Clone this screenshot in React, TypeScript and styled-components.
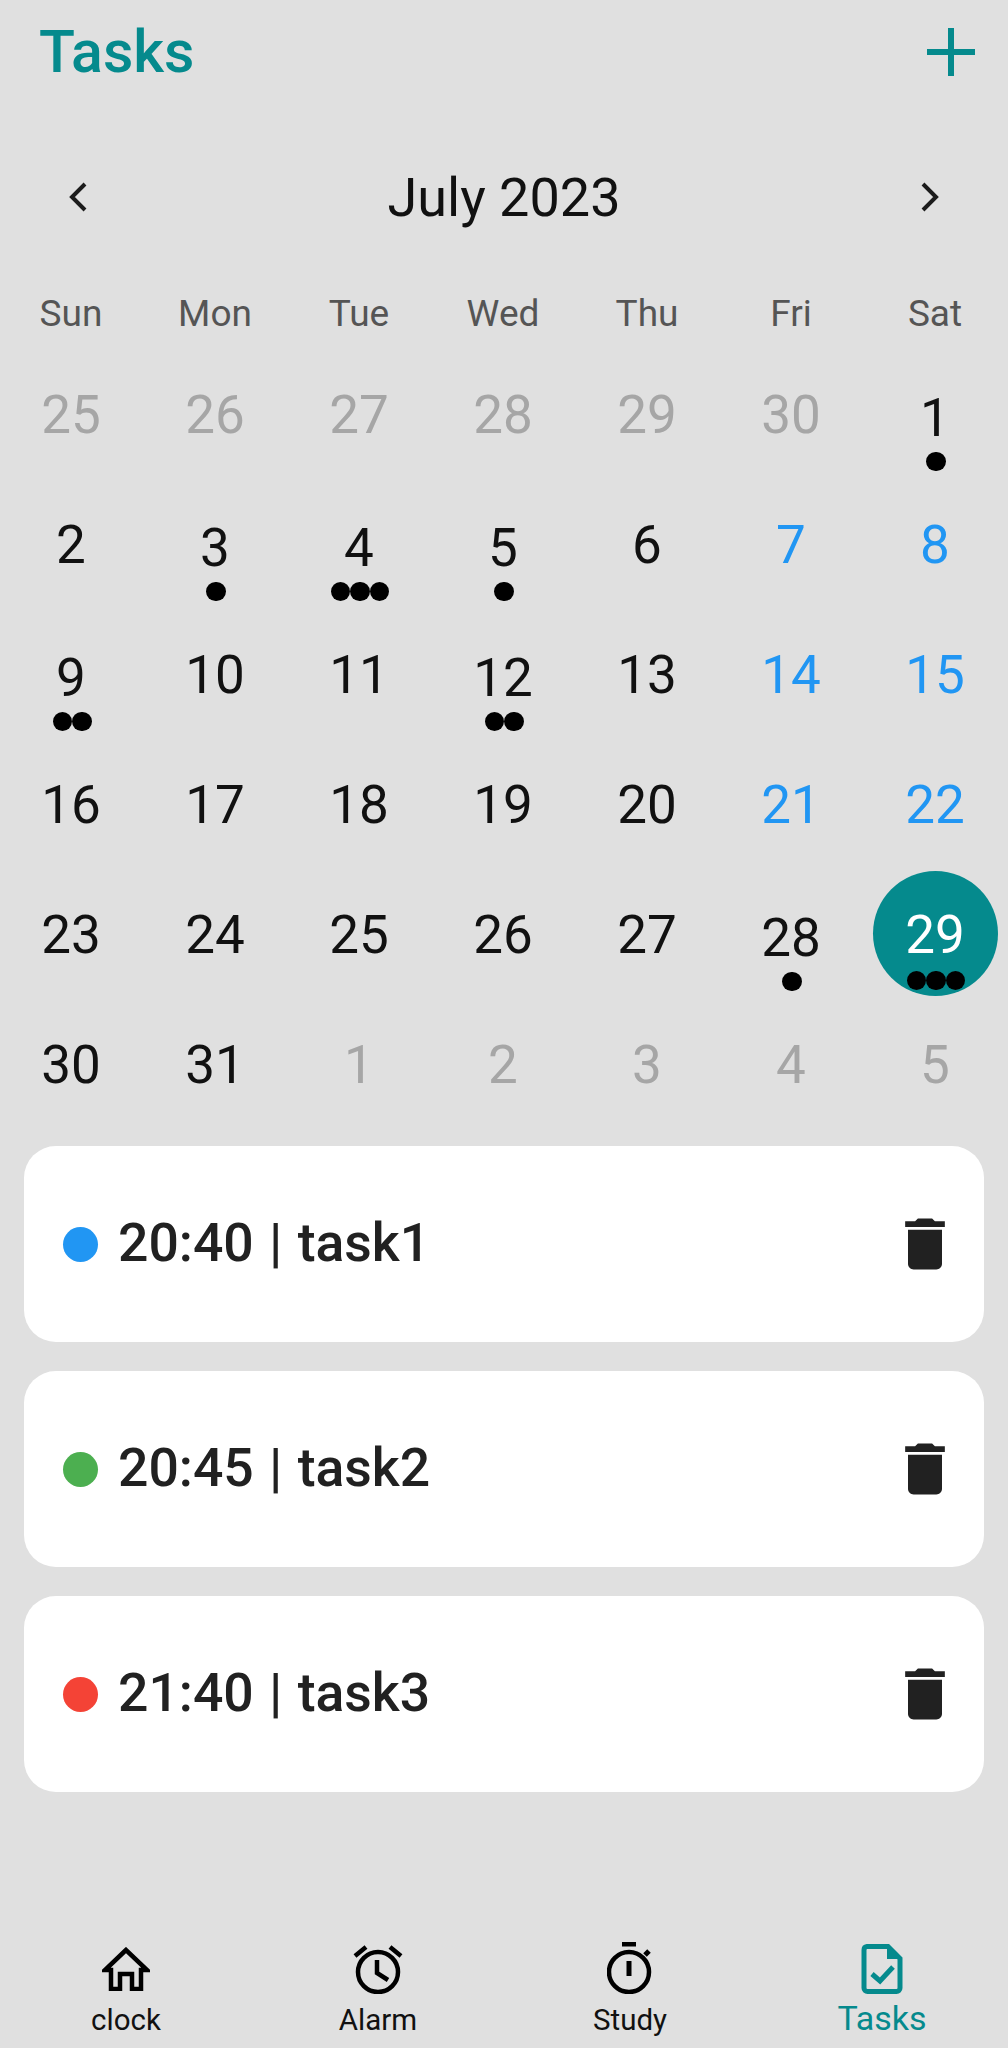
import React from "react";
import styled, { createGlobalStyle } from "styled-components";
import { MdDelete } from "react-icons/md";

const teal = "#058a8d";
const blue = "#2196f3";

const GlobalStyle = createGlobalStyle`
  html, body {
    margin: 0;
    padding: 0;
    background: #e0e0e0;
  }
  * {
    box-sizing: border-box;
  }
`;

const Page = styled.div`
  width: 1008px;
  height: 2048px;
  display: flex;
  flex-direction: column;
  background: #e0e0e0;
  font-family: Roboto, "Liberation Sans", sans-serif;
  overflow: hidden;
`;

const Header = styled.header`
  height: 104px;
  padding: 0 33px 0 39px;
  display: flex;
  align-items: center;
  justify-content: space-between;
`;

const Title = styled.h1`
  margin: 0 0 2px;
  font-size: 59px;
  font-weight: 500;
  color: ${teal};
`;

const MonthRow = styled.div`
  height: 132px;
  margin-top: 27px;
  padding: 0 68px;
  display: flex;
  align-items: center;
  justify-content: space-between;
`;

const MonthName = styled.div`
  font-size: 54px;
  color: #111;
`;

const WeekRow = styled.div`
  height: 72px;
  margin-top: 14px;
  margin-left: -1px;
  display: grid;
  grid-template-columns: repeat(7, 144px);
  align-items: center;
`;

const WeekDay = styled.div`
  text-align: center;
  font-size: 37px;
  color: #555;
`;

const DayGrid = styled.div`
  margin-left: -1px;
  display: grid;
  grid-template-columns: repeat(7, 144px);
  grid-auto-rows: 130px;
`;

const Cell = styled.div`
  display: flex;
  align-items: center;
  justify-content: center;
`;

type Tone = "muted" | "normal" | "weekend" | "selected";

const toneColors: Record<Tone, string> = {
  muted: "#a6a6a6",
  normal: "#111",
  weekend: blue,
  selected: "#fff",
};

const DayCircle = styled.div<{ $tone: Tone; $marked: boolean }>`
  position: relative;
  width: 125px;
  height: 125px;
  border-radius: 50%;
  display: flex;
  align-items: center;
  justify-content: center;
  font-size: 53px;
  padding-top: ${(p) => (p.$tone === "selected" ? "3px" : p.$marked ? "7px" : "2px")};
  margin-top: ${(p) => (p.$tone === "selected" ? "-2px" : "0")};
  color: ${(p) => toneColors[p.$tone]};
  background: ${(p) => (p.$tone === "selected" ? teal : "transparent")};
`;

const Dots = styled.div`
  position: absolute;
  left: 2px;
  right: 0;
  top: 100px;
  display: flex;
  justify-content: center;
`;

const Dot = styled.span`
  width: 19.5px;
  height: 19.5px;
  border-radius: 50%;
  background: #000;
`;

const TaskList = styled.div`
  margin-top: 17px;
  padding: 0 24px;
  display: flex;
  flex-direction: column;
  gap: 29px;
`;

const TaskCard = styled.div`
  height: 196px;
  padding: 0 25px 0 39px;
  border-radius: 32px;
  background: #fff;
  display: flex;
  align-items: center;
  color: #212121;
`;

const ColorDot = styled.span<{ $color: string }>`
  width: 35px;
  height: 35px;
  border-radius: 50%;
  margin-right: 20px;
  background: ${(p) => p.$color};
`;

const TaskText = styled.div`
  flex: 1;
  padding-bottom: 3px;
  font-size: 53.5px;
  font-weight: 500;
  word-spacing: 2px;
`;

const BottomNav = styled.nav`
  margin-top: auto;
  height: 122px;
  display: grid;
  grid-template-columns: repeat(4, 252px);
`;

const NavItem = styled.div<{ $active?: boolean }>`
  display: flex;
  flex-direction: column;
  align-items: center;
  color: ${(p) => (p.$active ? teal : "#111")};
  font-size: ${(p) => (p.$active ? "34px" : "29.5px")};
  line-height: ${(p) => (p.$active ? "44px" : "40px")};
`;

const NavIconBox = styled.div<{ $active?: boolean; $shift: number }>`
  height: ${(p) => (p.$active ? "70px" : "74px")};
  padding-top: ${(p) => p.$shift}px;
  display: flex;
  justify-content: center;
`;

const PlusIcon = () => (
  <svg width="48" height="48" viewBox="0 0 48 48">
    <path d="M24 0v48M0 24h48" stroke={teal} strokeWidth="6" fill="none" />
  </svg>
);

const Chevron = ({ right }: { right?: boolean }) => (
  <svg width="20" height="30" viewBox="0 0 20 30">
    <path
      d={right ? "M3 2l13 13L3 28" : "M17 2L4 15l13 13"}
      stroke="#1c1c1c"
      strokeWidth="4"
      fill="none"
    />
  </svg>
);

const HomeIcon = () => (
  <svg width="48" height="44" viewBox="0 0 48 44">
    <path
      d="M24 3L3 23h6v19h9V27h12v15h9V23h6z"
      stroke="#000"
      strokeWidth="4.5"
      fill="none"
    />
  </svg>
);

const AlarmIcon = () => (
  <svg width="50" height="50" viewBox="0 0 50 50">
    <circle cx="25" cy="28" r="20" stroke="#000" strokeWidth="4.5" fill="none" />
    <path
      d="M24 16v13l11 7M2 12L13 3M48 12L37 3"
      stroke="#000"
      strokeWidth="4.5"
      fill="none"
    />
  </svg>
);

const TimerIcon = () => (
  <svg width="46" height="52" viewBox="0 0 46 52">
    <circle cx="22" cy="30" r="20" stroke="#000" strokeWidth="4.5" fill="none" />
    <path
      d="M15 2h14M22 19v15M38 13l4-4"
      stroke="#000"
      strokeWidth="5"
      fill="none"
    />
  </svg>
);

const TaskDocIcon = () => (
  <svg width="42" height="50" viewBox="0 0 42 50">
    <path
      d="M6 2.5h21l12 12V44a3.500 3.500 0 0 1-3.500 3.500h-29A3.500 3.500 0 0 1 3 44V6a3.500 3.500 0 0 1 3-3.500z"
      stroke={teal}
      strokeWidth="5"
      fill="none"
    />
    <path d="M26 1l14 14H26z" fill={teal} />
    <path d="M11 30l8 7 13-14" stroke={teal} strokeWidth="5" fill="none" />
  </svg>
);

const weekDays = ["Sun", "Mon", "Tue", "Wed", "Thu", "Fri", "Sat"];

type Day = { label: number; tone?: Tone; dots?: number };

const muted = (label: number): Day => ({ label, tone: "muted" });

const days: Day[] = [
  muted(25), muted(26), muted(27), muted(28), muted(29), muted(30),
  { label: 1, dots: 1 },
  { label: 2 }, { label: 3, dots: 1 }, { label: 4, dots: 3 }, { label: 5, dots: 1 }, { label: 6 },
  { label: 7, tone: "weekend" }, { label: 8, tone: "weekend" },
  { label: 9, dots: 2 }, { label: 10 }, { label: 11 }, { label: 12, dots: 2 }, { label: 13 },
  { label: 14, tone: "weekend" }, { label: 15, tone: "weekend" },
  { label: 16 }, { label: 17 }, { label: 18 }, { label: 19 }, { label: 20 },
  { label: 21, tone: "weekend" }, { label: 22, tone: "weekend" },
  { label: 23 }, { label: 24 }, { label: 25 }, { label: 26 }, { label: 27 },
  { label: 28, dots: 1 }, { label: 29, tone: "selected", dots: 3 },
  { label: 30 }, { label: 31 },
  muted(1), muted(2), muted(3), muted(4), muted(5),
];

const tasks = [
  { text: "20:40 | task1", color: blue },
  { text: "20:45 | task2", color: "#4caf50" },
  { text: "21:40 | task3", color: "#f44336" },
];

const App = () => {
  return (
    <Page>
      <GlobalStyle />
      <Header>
        <Title>Tasks</Title>
        <PlusIcon />
      </Header>

      <MonthRow>
        <Chevron />
        <MonthName>July 2023</MonthName>
        <Chevron right />
      </MonthRow>

      <WeekRow>
        {weekDays.map((d) => (
          <WeekDay key={d}>{d}</WeekDay>
        ))}
      </WeekRow>

      <DayGrid>
        {days.map((d, i) => (
          <Cell key={i}>
            <DayCircle $tone={d.tone ?? "normal"} $marked={!!d.dots}>
              {d.label}
              {d.dots ? (
                <Dots>
                  {Array.from({ length: d.dots }).map((_, n) => (
                    <Dot key={n} />
                  ))}
                </Dots>
              ) : null}
            </DayCircle>
          </Cell>
        ))}
      </DayGrid>

      <TaskList>
        {tasks.map((t) => (
          <TaskCard key={t.text}>
            <ColorDot $color={t.color} />
            <TaskText>{t.text}</TaskText>
            <MdDelete size={68} color="#212121" />
          </TaskCard>
        ))}
      </TaskList>

      <BottomNav>
        <NavItem>
          <NavIconBox $shift={21}><HomeIcon /></NavIconBox>
          clock
        </NavItem>
        <NavItem>
          <NavIconBox $shift={18}><AlarmIcon /></NavIconBox>
          Alarm
        </NavItem>
        <NavItem>
          <NavIconBox $shift={16}><TimerIcon /></NavIconBox>
          Study
        </NavItem>
        <NavItem $active>
          <NavIconBox $active $shift={18}><TaskDocIcon /></NavIconBox>
          Tasks
        </NavItem>
      </BottomNav>
    </Page>
  );
};

export default App;
